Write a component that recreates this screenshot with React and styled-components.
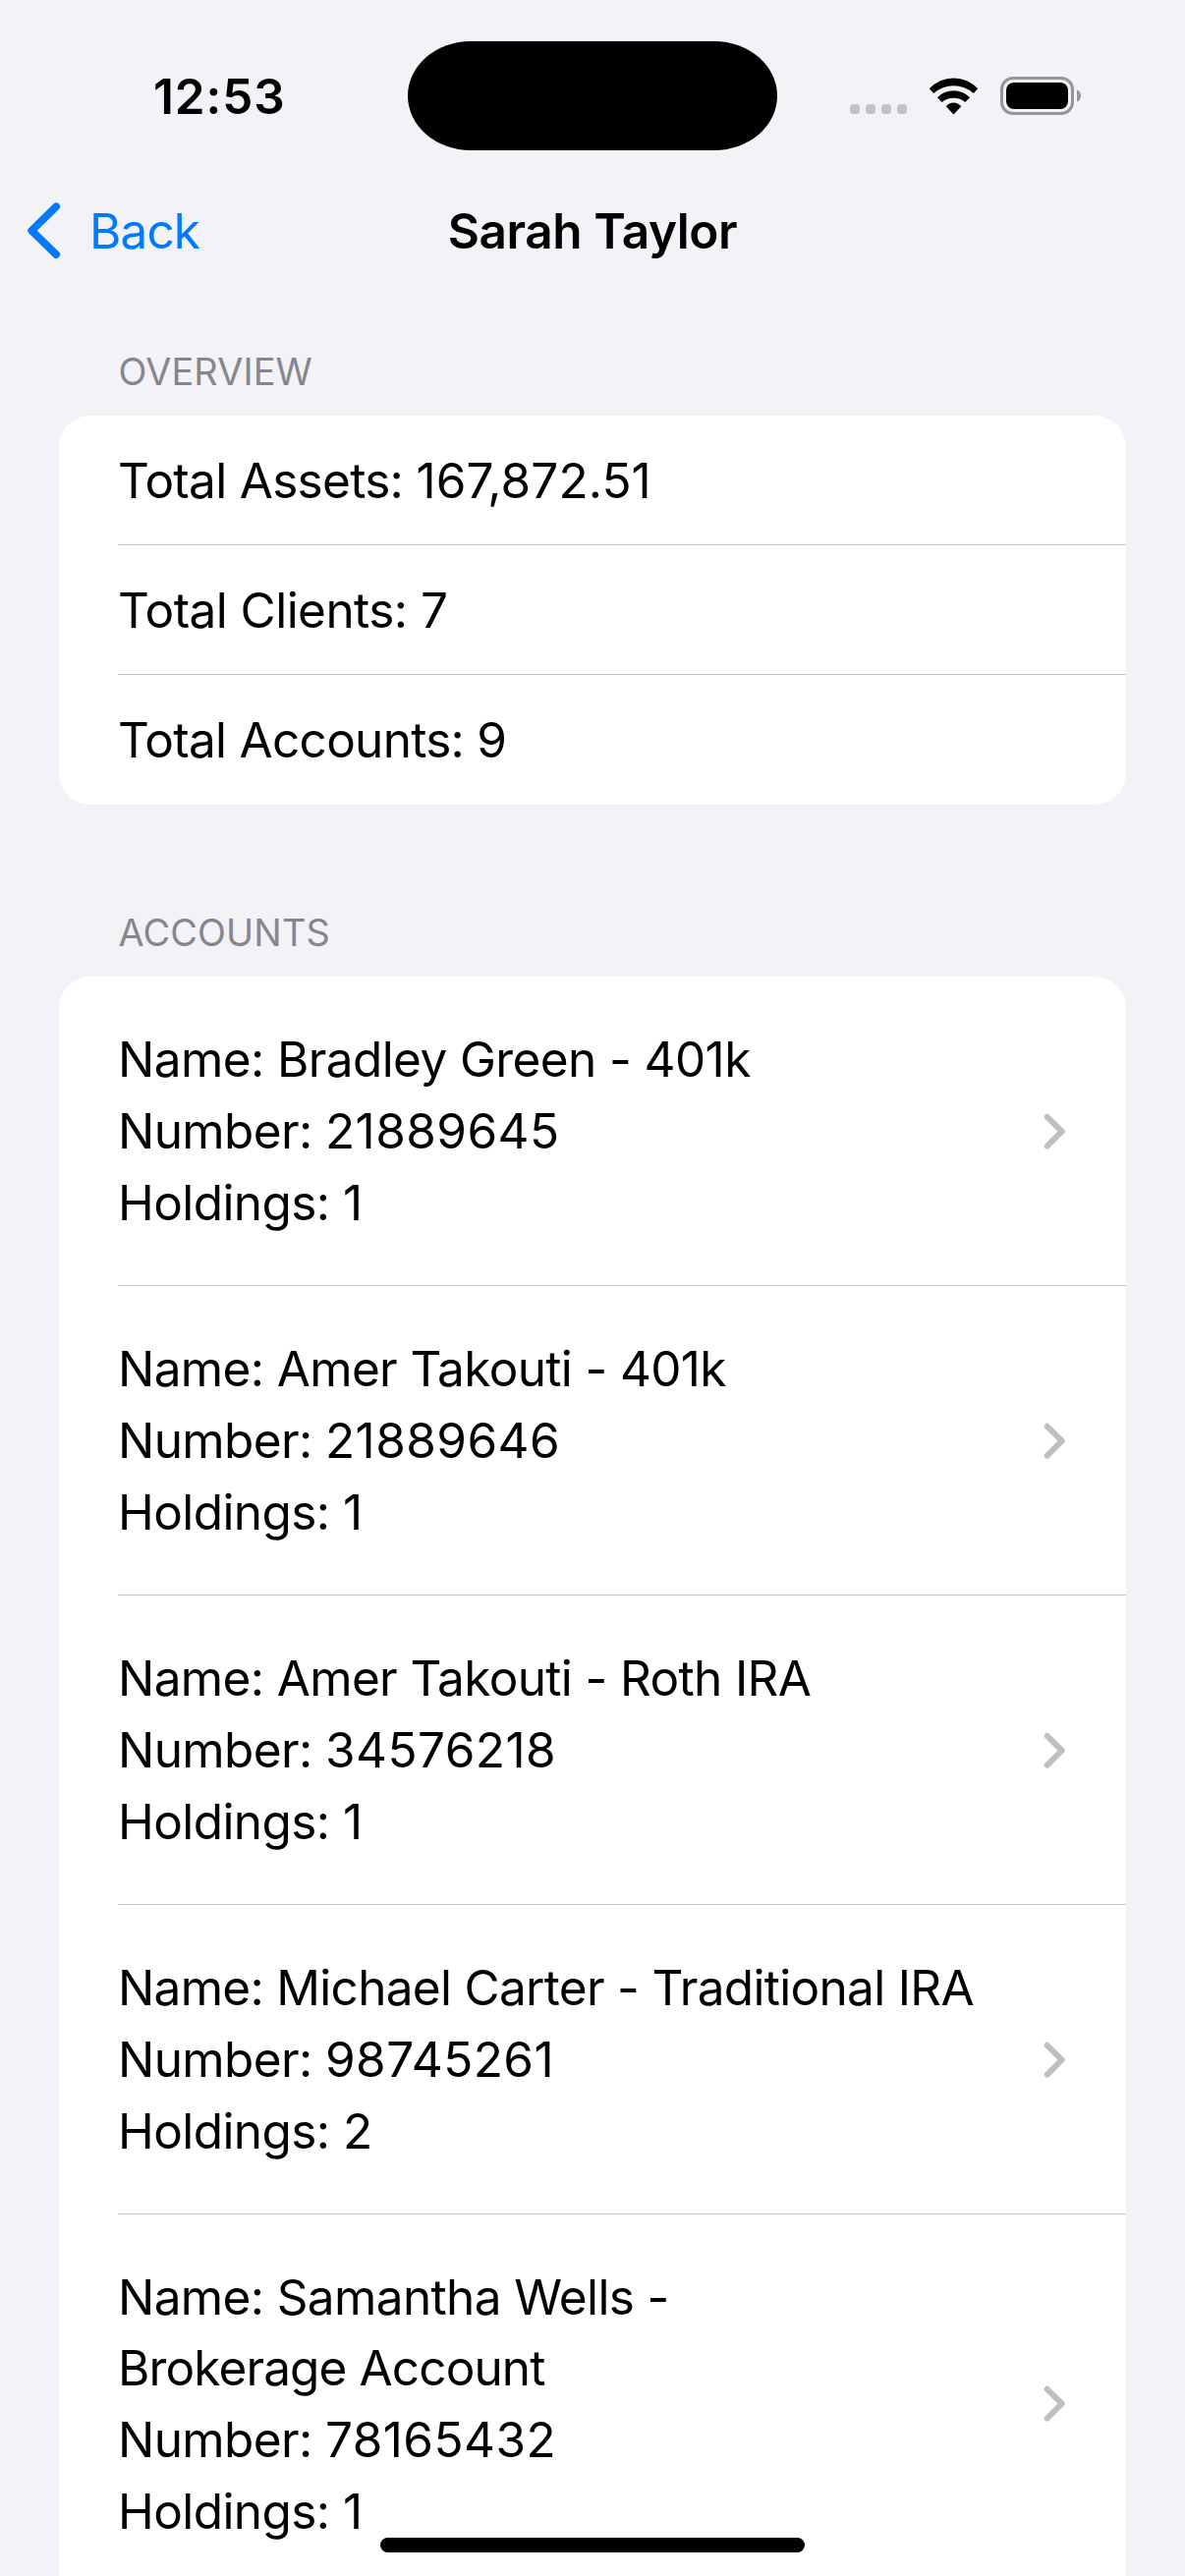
import React from "react";
import styled, { createGlobalStyle } from "styled-components";

const GlobalStyle = createGlobalStyle`
  *, *::before, *::after { box-sizing: border-box; }
  html, body { margin: 0; padding: 0; background: #f2f2f7; }
`;

const Screen = styled.div`
  position: relative;
  width: 1206px;
  height: 2622px;
  overflow: hidden;
  background: #f2f2f7;
  color: #000;
  font-family: Inter, "Liberation Sans", sans-serif;
  font-size: 49.5px;
  letter-spacing: -0.62px;
  white-space: nowrap;
`;

const StatusBar = styled.header`
  display: flex;
  align-items: center;
  height: 169px;
  padding-top: 25px;
`;

const Time = styled.time`
  flex: 0 0 415px;
  padding: 2px 0 0 156px;
  font-weight: 600;
  line-height: 60px;
  letter-spacing: 0.9px;
`;

const Island = styled.div`
  flex: 0 0 376px;
  height: 111px;
  border-radius: 64px / 55.5px;
  background: #000;
`;

const StatusIcons = styled.div`
  display: flex;
  align-items: flex-end;
  gap: 22px;
  height: 39px;
  margin: 1px 0 0 74px;
`;

const SignalDots = styled.div`
  display: flex;
  gap: 6px;
  width: 58px;
  margin-bottom: 1px;
`;

const Dot = styled.span`
  width: 10px;
  height: 10px;
  border-radius: 3.5px;
  background: #c2c1c6;
`;

const Icon = styled.svg`
  display: block;
  flex: none;
`;

const NavBar = styled.nav`
  display: grid;
  grid-template-columns: 1fr auto 1fr;
  align-items: center;
  height: 132px;
`;

const BackButton = styled.button`
  display: flex;
  align-items: center;
  gap: 27px;
  padding: 0 0 0 27px;
  border: 0;
  background: none;
  color: #007aff;
  font: inherit;
  line-height: 60px;
  letter-spacing: -0.9px;
`;

const Title = styled.h1`
  margin: 0;
  font-size: inherit;
  font-weight: 600;
  line-height: 60px;
  letter-spacing: -0.44px;
`;

const SectionHeader = styled.h2`
  margin: 0;
  padding: ${(p) => p.$top}px 0 22px 120.5px;
  color: #87868b;
  font-size: 37.8px;
  font-weight: 400;
  line-height: 46px;
  letter-spacing: 0.15px;
`;

const Card = styled.section`
  margin: 0 60px;
  border-radius: ${(p) => (p.$continues ? "32px 32px 0 0" : "32px")};
  background: #fff;
`;

const Row = styled.div`
  position: relative;
  display: flex;
  align-items: center;
  justify-content: space-between;
  padding: 0 62px 0 60px;

  &:not(:last-child)::after {
    content: "";
    position: absolute;
    left: 60px;
    right: 0;
    bottom: 0;
    height: 1px;
    background: #c5c5c7;
  }
`;

const SummaryRow = styled(Row)`
  height: 132px;
`;

const AccountRow = styled(Row)`
  padding-top: 48px;
  padding-bottom: 48px;
`;

const AccountText = styled.div`
  display: flex;
  flex-direction: column;
`;

const Line = styled.span`
  line-height: ${(p) => p.$height || 73}px;
  letter-spacing: ${(p) => p.$tracking ?? -0.62}px;
`;

const Digits = styled.span`
  letter-spacing: ${(p) => p.$tracking ?? 0.45}px;
`;

const HomeIndicator = styled.div`
  position: absolute;
  left: 386.5px;
  bottom: 24px;
  width: 432.5px;
  height: 15px;
  border-radius: 7.5px;
  background: #000;
`;

const accounts = [
  { name: [{ text: "Name: Bradley Green - 401k", tracking: -0.59 }], number: "21889645", holdings: 1 },
  { name: [{ text: "Name: Amer Takouti - 401k", tracking: -0.64 }], number: "21889646", holdings: 1 },
  { name: [{ text: "Name: Amer Takouti - Roth IRA", tracking: -0.64 }], number: "34576218", holdings: 1 },
  { name: [{ text: "Name: Michael Carter - Traditional IRA", tracking: -0.7 }], number: "98745261", holdings: 2 },
  {
    name: [
      { text: "Name: Samantha Wells -", tracking: -0.63, height: 72.4 },
      { text: "Brokerage Account", tracking: -0.88, height: 72.4 },
    ],
    number: "78165432",
    holdings: 1,
  },
];

function WifiIcon() {
  return (
    <Icon width="51" height="38" viewBox="0 0 51 38">
      <path d="M0.8 11.3A33.4 33.4 0 0 1 50.2 11.3L45.7 16A30.3 30.3 0 0 0 5.3 16Z" />
      <path d="M9 20.2A22.9 22.9 0 0 1 42 20.2L37.3 25A18.7 18.7 0 0 0 13.7 25Z" />
      <path d="M17.7 29.3A9.9 9.9 0 0 1 33.3 29.3L25.5 37.5Z" />
    </Icon>
  );
}

function BatteryIcon() {
  return (
    <Icon width="82" height="39" viewBox="0 0 82 39">
      <rect x="1.5" y="1.5" width="72" height="36" rx="11.5" fill="none" stroke="#959498" strokeWidth="3" />
      <rect x="6" y="6" width="63" height="27" rx="8" />
      <path d="M78 13.4C80.6 14.3 82 16.6 82 19.5S80.6 24.7 78 25.6Z" fill="#959498" />
    </Icon>
  );
}

function BackChevron() {
  return (
    <Icon width="37" height="60" viewBox="0 0 37 60" fill="none">
      <path d="M30.2 5.3L5.2 29.7L30.2 54.1" stroke="#007aff" strokeWidth="7.8" strokeLinecap="round" strokeLinejoin="round" />
    </Icon>
  );
}

function RowChevron() {
  return (
    <Icon width="22" height="38" viewBox="0 0 22 38" fill="none">
      <path d="M3.7 3.8L18.7 18.7L3.7 33.6" stroke="#bfbfc0" strokeWidth="6" strokeLinecap="round" strokeLinejoin="round" />
    </Icon>
  );
}

export default function App() {
  return (
    <Screen>
      <GlobalStyle />
      <StatusBar>
        <Time>12:53</Time>
        <Island />
        <StatusIcons>
          <SignalDots>
            <Dot />
            <Dot />
            <Dot />
            <Dot />
          </SignalDots>
          <WifiIcon />
          <BatteryIcon />
        </StatusIcons>
      </StatusBar>
      <NavBar>
        <BackButton>
          <BackChevron />
          Back
        </BackButton>
        <Title>Sarah Taylor</Title>
      </NavBar>

      <SectionHeader $top={54}>OVERVIEW</SectionHeader>
      <Card>
        <SummaryRow>
          <Line $tracking={-0.7}>
            Total Assets: <Digits $tracking={0.1}>167,872.51</Digits>
          </Line>
        </SummaryRow>
        <SummaryRow>
          <Line $tracking={-0.55}>Total Clients: 7</Line>
        </SummaryRow>
        <SummaryRow>
          <Line $tracking={-0.72}>Total Accounts: 9</Line>
        </SummaryRow>
      </Card>

      <SectionHeader $top={107}>ACCOUNTS</SectionHeader>
      <Card $continues>
        {accounts.map((account) => (
          <AccountRow key={account.number}>
            <AccountText>
              {account.name.map((line) => (
                <Line key={line.text} $tracking={line.tracking} $height={line.height}>
                  {line.text}
                </Line>
              ))}
              <Line>
                Number: <Digits>{account.number}</Digits>
              </Line>
              <Line $tracking={-0.58}>Holdings: {account.holdings}</Line>
            </AccountText>
            <RowChevron />
          </AccountRow>
        ))}
      </Card>
      <HomeIndicator />
    </Screen>
  );
}
